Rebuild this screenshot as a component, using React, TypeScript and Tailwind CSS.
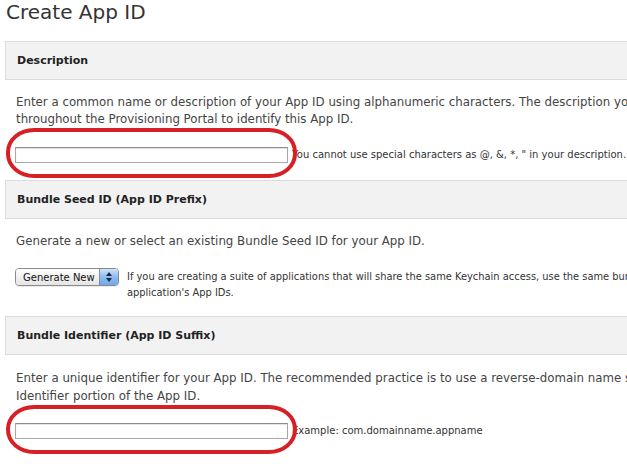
import React from 'react';

function SectionHeader({ title }: { title: string }) {
    return (
        <div className="ml-[5px] h-[39px] flex items-center border border-r-0 border-[#dcdcdc] bg-[#f2f2f2] pl-[11px] pt-[1px] text-[11px] font-bold text-[#222]">
            {title}
        </div>
    );
}

function Annotated({ children, tall }: { children: React.ReactNode; tall?: boolean }) {
    return (
        <div className="relative shrink-0">
            {children}
            <div
                className={
                    tall
                        ? 'absolute left-[-9px] top-[-18px] w-[291px] h-[49px] rounded-[28px/24px] border-[4px] border-[#d71f26] pointer-events-none'
                        : 'absolute left-[-9px] top-[-19px] w-[291px] h-[50px] rounded-[28px/24px] border-[4px] border-[#d71f26] pointer-events-none'
                }
            />
        </div>
    );
}

function TextInput() {
    return (
        <div className="w-[273px] h-[16px] border border-[#a7a7a7] border-t-[#8c8c8c] bg-white shadow-[inset_0_1px_1px_rgba(0,0,0,0.12)]" />
    );
}

function SelectButton() {
    return (
        <div className="shrink-0 flex h-[18px] w-[104px] rounded-[4px] border border-[#8b8b8b] overflow-hidden shadow-[0_1px_0_rgba(0,0,0,0.08)]">
            <div className="flex-1 flex items-center pl-[7px] bg-gradient-to-b from-white to-[#e4e4e4] text-[10px] text-[#111] whitespace-nowrap">
                Generate New
            </div>
            <div className="w-[19px] flex flex-col items-center justify-center gap-[2px] border-l border-[#7a8fb0] bg-gradient-to-b from-[#cfe3fa] via-[#8dbcf0] to-[#6fa9ea]">
                <svg width="6" height="4" viewBox="0 0 6 4">
                    <path d="M0 4 L3 0 L6 4 Z" fill="#1b2a44" />
                </svg>
                <svg width="6" height="4" viewBox="0 0 6 4">
                    <path d="M0 0 L3 4 L6 0 Z" fill="#1b2a44" />
                </svg>
            </div>
        </div>
    );
}

export default function App() {
    return (
        <div
            className="w-[627px] h-[464px] overflow-hidden bg-white text-[#444]"
            style={{ fontFamily: '"DejaVu Sans", "Liberation Sans", sans-serif' }}
        >
            <div className="w-[760px]">
                <h1 className="pl-[6px] text-[20px] leading-[24px] text-[#333]">Create App ID</h1>

                <div className="mt-[17px]">
                    <SectionHeader title="Description" />
                </div>
                <p className="mt-[14px] pl-[16px] text-[11.8px] leading-[17px] whitespace-nowrap">
                    Enter a common name or description of your App ID using alphanumeric characters. The description you specify will be used
                    <br />
                    throughout the Provisioning Portal to identify this App ID.
                </p>
                <div className="mt-[19px] pl-[15px] flex items-center gap-[4px]">
                    <Annotated>
                        <TextInput />
                    </Annotated>
                    <span className="text-[10px] leading-[16px] text-[#333] whitespace-nowrap">
                        You cannot use special characters as @, &amp;, *, &quot; in your description.
                    </span>
                </div>

                <div className="mt-[17px]">
                    <SectionHeader title="Bundle Seed ID (App ID Prefix)" />
                </div>
                <p className="mt-[14px] pl-[16px] text-[11.8px] leading-[17px] whitespace-nowrap">
                    Generate a new or select an existing Bundle Seed ID for your App ID.
                </p>
                <div className="mt-[18px] pl-[15px] flex items-start gap-[8px]">
                    <SelectButton />
                    <p className="mt-[1px] text-[9.9px] leading-[16px] text-[#333] whitespace-nowrap">
                        If you are creating a suite of applications that will share the same Keychain access, use the same bundle seed ID for each of your
                        <br />
                        application's App IDs.
                    </p>
                </div>

                <div className="mt-[15px]">
                    <SectionHeader title="Bundle Identifier (App ID Suffix)" />
                </div>
                <p className="mt-[14px] pl-[16px] text-[11.8px] leading-[18px] whitespace-nowrap">
                    Enter a unique identifier for your App ID. The recommended practice is to use a reverse-domain name style string for the Bundle
                    <br />
                    Identifier portion of the App ID.
                </p>
                <div className="mt-[18px] pl-[15px] flex items-center gap-[4px]">
                    <Annotated tall>
                        <TextInput />
                    </Annotated>
                    <span className="text-[10px] leading-[16px] text-[#333] whitespace-nowrap">Example: com.domainname.appname</span>
                </div>
            </div>
        </div>
    );
}
